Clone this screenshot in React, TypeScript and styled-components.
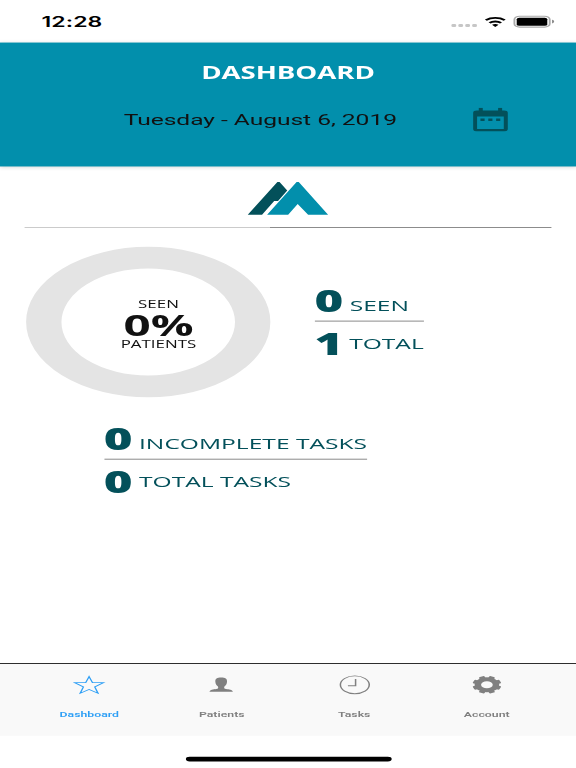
import React from "react";
import styled, { createGlobalStyle } from "styled-components";

const teal = "#028fac";
const deep = "#03505a";

const GlobalStyle = createGlobalStyle`
  * { box-sizing: border-box; }
  body { margin: 0; background: #fff; overflow: hidden; }
`;

const Viewport = styled.div`
  width: 576px;
  height: 768px;
  overflow: hidden;
`;

/* Phone screen in logical points, stretched to fill the viewport. */
const Screen = styled.main`
  width: 375px;
  height: 812px;
  display: flex;
  flex-direction: column;
  background: #fff;
  color: #111;
  font-family: "Open Sans", sans-serif;
  transform: scale(1.536, 0.945813);
  transform-origin: 0 0;
`;

const StatusBar = styled.div`
  flex: none;
  height: 44.6px;
  display: flex;
  align-items: flex-start;
  justify-content: space-between;
  padding: 14px 14px 0 27px;
`;

const Clock = styled.time`
  font: 600 15px/20px Inter, sans-serif;
  letter-spacing: 0.05px;
  color: #000;
`;

const StatusIcons = styled.div`
  display: flex;
  padding-top: 1px;
  svg { display: block; }
`;

const Header = styled.header`
  flex: none;
  height: 131px;
  background: ${teal};
  box-shadow: 0 1px 4px rgba(0, 0, 0, 0.25);
  display: flex;
  flex-direction: column;
`;

const Title = styled.h1`
  margin: 19.4px 0 0;
  text-align: center;
  font-size: 18px;
  line-height: 24px;
  letter-spacing: -0.05px;
  font-weight: 700;
  color: #fff;
`;

const DateRow = styled.div`
  display: flex;
  align-items: flex-start;
  padding: 25.6px 44.2px 0 80.5px;
  justify-content: space-between;
  svg { display: block; }
`;

const DateText = styled.span`
  font: 400 16px/22px Roboto, sans-serif;
  padding-top: 2.2px;
  letter-spacing: -0.02px;
  white-space: nowrap;
`;

const Content = styled.section`
  flex: 1;
  min-height: 0;
  display: flex;
  flex-direction: column;
`;

const Brand = styled.div`
  display: flex;
  justify-content: center;
  height: 64px;
  padding-top: 16px;
  svg { display: block; }
`;

const Progress = styled.div`
  height: 1px;
  margin: 0 16.3px;
  background: linear-gradient(to right, #c8c8c8 159.5px, #858585 159.5px);
`;

const Summary = styled.div`
  display: flex;
  align-items: flex-start;
  padding: 20px 0 0 16.7px;
`;

const Ring = styled.div`
  width: 159px;
  height: 159px;
  border: 23px solid #e4e4e4;
  border-radius: 50%;
  display: flex;
  flex-direction: column;
  align-items: center;
  padding: 31.2px 0 0 14px;
`;

const RingCaption = styled.span`
  font-size: 11px;
  line-height: 14px;
`;

const RingValue = styled.strong`
  font-size: 31px;
  line-height: 28px;
  font-weight: 700;
`;

const Stats = styled.div<{ $width: number; $top?: number; $left: number }>`
  width: ${(p) => p.$width}px;
  margin: ${(p) => p.$top ?? 0}px 0 0 ${(p) => p.$left}px;
  color: ${deep};
`;

const StatRow = styled.div<{ $divided?: boolean }>`
  display: flex;
  align-items: flex-start;
  height: ${(p) => (p.$divided ? 41 : 38)}px;
  padding-top: ${(p) => (p.$divided ? 1.5 : 5.8)}px;
  border-bottom: ${(p) => (p.$divided ? "1px solid #858585" : "none")};
`;

const StatNumber = styled.strong`
  width: 23px;
  font-size: 32px;
  line-height: 34px;
  font-weight: 800;
`;

const StatLabel = styled.span<{ $raised?: boolean }>`
  padding-top: ${(p) => (p.$raised ? 6.7 : 12.3)}px;
  font-size: 16px;
  line-height: 20px;
  white-space: nowrap;
`;

const TabBar = styled.nav`
  flex: none;
  height: 77px;
  display: flex;
  padding: 0 15px;
  background: #f9f9f9;
  border-top: 1px solid #222;
`;

const Tab = styled.div<{ $active?: boolean }>`
  flex: 1;
  display: flex;
  flex-direction: column;
  align-items: center;
  padding-top: 6.3px;
  color: ${(p) => (p.$active ? "#2e9ff5" : "#808080")};
  svg { display: block; }
`;

const TabLabel = styled.span`
  margin-top: 11px;
  font: 600 8px/10px Roboto, sans-serif;
`;

const HomeArea = styled.div`
  flex: none;
  height: 34px;
  display: flex;
  justify-content: center;
  padding-top: 21.6px;
`;

const HomeIndicator = styled.div`
  width: 134px;
  height: 5px;
  border-radius: 3px;
  background: #000;
`;

const SignalIcons = () => (
  <svg width="70" height="15" viewBox="0 0 70 15">
    <g fill="#c6c6c6">
      {[2.9, 7.4, 11.9, 16.4].map((x) => (
        <rect key={x} x={x} y="10.4" width="3.1" height="3.1" rx="1" />
      ))}
    </g>
    <g fill="none" stroke="#000" strokeWidth="1.9">
      <path d="M25.3 6.3a9.2 9.2 0 0 1 12.3 0" />
      <path d="M27.7 9.2a5.5 5.5 0 0 1 7.5 0" />
    </g>
    <path d="M29.3 11.3a3.1 3.1 0 0 1 4.3 0L31.45 13.6z" fill="#000" />
    <rect x="43.9" y="2.2" width="23" height="11.5" rx="3.4" fill="#fff" stroke="#aaa" strokeWidth="1.2" />
    <rect x="45.4" y="3.7" width="19.9" height="8.5" rx="1.6" fill="#000" />
    <path d="M68.4 6v3.8c1.9-.7 1.9-3.1 0-3.8z" fill="#888" />
  </svg>
);

const CalendarIcon = () => (
  <svg width="22.6" height="25" viewBox="0 0 22.6 25">
    <path
      fill={deep}
      fillRule="evenodd"
      d="M3.7 0h2.6v2.8h10V0h2.6v2.8h1.2a2.5 2.5 0 0 1 2.5 2.5v17.2a2.5 2.5 0 0 1-2.5 2.5H2.5A2.5 2.5 0 0 1 0 22.5V5.3a2.5 2.5 0 0 1 2.5-2.5h1.2zM2.6 9.2v13.3h17.4V9.2zM4.8 11.3h2.7v2.6H4.8zM9.9 11.3h2.7v2.6H9.9zM15 11.3h2.7v2.6H15z"
    />
  </svg>
);

const Logo = () => (
  <svg width="53" height="36" viewBox="0 0 53 36">
    <path d="M.3 35L19.6.5h1.4L26 9.3 20 20.5h-2.5L9.6 35z" fill={deep} />
    <path d="M12.9 35L32.1.5h1.4L52.6 35H39.6L32.8 23.6 26.6 35z" fill={teal} />
  </svg>
);

const StarIcon = () => (
  <svg width="32" height="32" viewBox="0 0 32 32">
    <path
      d="M16 7.3l2.2 6.4h7.2l-5.7 4.5 2.1 6.8L16 20.9 10.2 25l2.1-6.8-5.7-4.5h7.2z"
      fill="none"
      stroke="currentColor"
      strokeWidth=".9"
    />
  </svg>
);

const PersonIcon = () => (
  <svg width="32" height="32" viewBox="0 0 32 32">
    <path
      fill="currentColor"
      d="M16 8.200c-2.700 0-4 1.400-3.800 4.500.1 2.300.6 3.900 1.700 5 .4 1.600.1 2.300-1.100 2.700-1.900.6-4.100.5-4.400 3h15.200c-.3-2.500-2.500-2.400-4.400-3-1.200-.4-1.500-1.100-1.100-2.700 1.100-1.100 1.600-2.700 1.700-5 .2-3.100-1.100-4.500-3.800-4.500z"
    />
  </svg>
);

const ClockIcon = () => (
  <svg width="32" height="32" viewBox="0 0 32 32" fill="none" stroke="currentColor">
    <circle cx="16" cy="16" r="9.4" />
    <path d="M16.5 10v7h-5" />
  </svg>
);

const GearIcon = () => (
  <svg width="32" height="32" viewBox="0 0 32 32">
    <g fill="currentColor">
      {[22.5, 67.5, 112.5, 157.5].map((a) => (
        <rect key={a} x="14" y="6.6" width="4" height="18.8" rx="1" transform={`rotate(${a} 16 16)`} />
      ))}
      <circle cx="16" cy="16" r="8" />
    </g>
    <circle cx="16" cy="16" r="3.8" fill="#f9f9f9" />
  </svg>
);

const tabs = [
  { label: "Dashboard", Icon: StarIcon, active: true },
  { label: "Patients", Icon: PersonIcon },
  { label: "Tasks", Icon: ClockIcon },
  { label: "Account", Icon: GearIcon },
];

export default function App() {
  return (
    <Viewport>
      <GlobalStyle />
      <Screen>
        <StatusBar>
          <Clock>12:28</Clock>
          <StatusIcons>
            <SignalIcons />
          </StatusIcons>
        </StatusBar>
        <Header>
          <Title>DASHBOARD</Title>
          <DateRow>
            <DateText>Tuesday - August 6, 2019</DateText>
            <CalendarIcon />
          </DateRow>
        </Header>
        <Content>
          <Brand>
            <Logo />
          </Brand>
          <Progress />
          <Summary>
            <Ring>
              <RingCaption>SEEN</RingCaption>
              <RingValue>0%</RingValue>
              <RingCaption>PATIENTS</RingCaption>
            </Ring>
            <Stats $width={71.2} $left={29} $top={38.5}>
              <StatRow $divided>
                <StatNumber>0</StatNumber>
                <StatLabel>SEEN</StatLabel>
              </StatRow>
              <StatRow>
                <StatNumber>1</StatNumber>
                <StatLabel $raised>TOTAL</StatLabel>
              </StatRow>
            </Stats>
          </Summary>
          <Stats $width={171.5} $left={67.5} $top={25.5}>
            <StatRow $divided>
              <StatNumber>0</StatNumber>
              <StatLabel>INCOMPLETE TASKS</StatLabel>
            </StatRow>
            <StatRow>
              <StatNumber>0</StatNumber>
              <StatLabel $raised>TOTAL TASKS</StatLabel>
            </StatRow>
          </Stats>
        </Content>
        <TabBar>
          {tabs.map(({ label, Icon, active }) => (
            <Tab key={label} $active={active}>
              <Icon />
              <TabLabel>{label}</TabLabel>
            </Tab>
          ))}
        </TabBar>
        <HomeArea>
          <HomeIndicator />
        </HomeArea>
      </Screen>
    </Viewport>
  );
}
